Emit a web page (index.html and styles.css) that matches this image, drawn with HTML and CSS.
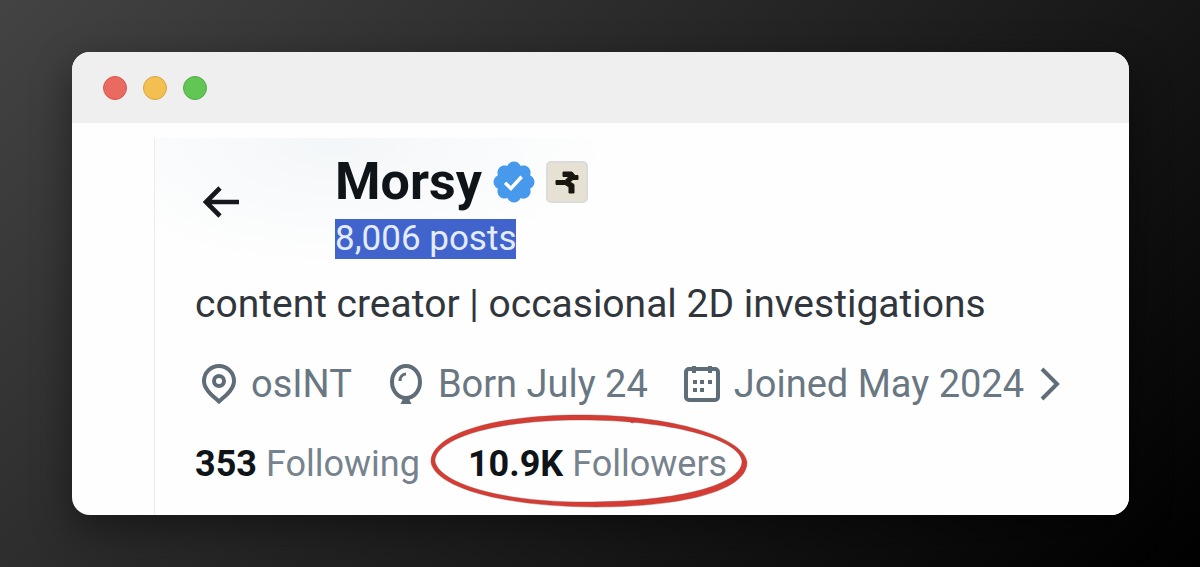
FILE: index.html
```html
<!DOCTYPE html>
<html lang="en">
<head>
<meta charset="utf-8">
<meta name="viewport" content="width=device-width, initial-scale=1">
<title>Morsy</title>
<link rel="stylesheet" href="styles.css">
</head>
<body class="backdrop">
<main class="window">
  <div class="titlebar">
    <span class="light light-close"></span>
    <span class="light light-minimize"></span>
    <span class="light light-zoom"></span>
  </div>
  <div class="viewport">
    <section class="profile">
      <header class="head">
        <button class="back" type="button" aria-label="Back">
          <svg class="back-icon" viewBox="0 0 38 32"><path d="M18 2 4 16l14 14M4 16h33" fill="none" stroke="currentColor" stroke-width="4.6"/></svg>
        </button>
        <div class="identity">
          <div class="name-row">
            <h1 class="name">Morsy</h1>
            <svg class="verified" viewBox="0 0 22 22" role="img" aria-label="Verified account"><path fill="#4799eb" d="M20.396 11c-.018-.646-.215-1.275-.57-1.816-.354-.54-.852-.972-1.438-1.246.223-.607.27-1.264.14-1.897-.131-.634-.437-1.218-.882-1.687-.47-.445-1.053-.75-1.687-.882-.633-.13-1.29-.083-1.897.14-.273-.587-.704-1.086-1.245-1.44S11.647 1.62 11 1.604c-.646.017-1.273.213-1.813.568s-.969.854-1.24 1.44c-.608-.223-1.267-.272-1.902-.14-.635.13-1.22.436-1.69.882-.445.47-.749 1.055-.878 1.688-.13.633-.08 1.29.144 1.896-.587.274-1.087.705-1.443 1.245-.356.54-.555 1.17-.574 1.817.02.647.218 1.276.574 1.817.356.54.856.972 1.443 1.245-.224.606-.274 1.263-.144 1.896.13.634.433 1.218.877 1.688.47.443 1.054.747 1.687.878.633.132 1.29.084 1.897-.136.274.586.705 1.084 1.246 1.439.54.354 1.17.551 1.816.569.647-.016 1.276-.213 1.817-.567s.972-.854 1.245-1.44c.604.239 1.266.296 1.903.164.636-.132 1.22-.447 1.68-.907.46-.46.776-1.044.908-1.681s.075-1.299-.165-1.903c.586-.274 1.084-.705 1.439-1.246.354-.54.551-1.17.569-1.816z"/><path fill="none" stroke="#fff" stroke-width="1.6" d="m6.900 11.300 2.700 2.700 4.900-5.400"/></svg>
            <svg class="affiliate" viewBox="0 0 42 42" role="img" aria-label="Affiliate badge"><rect x="1" y="1" width="40" height="40" rx="4" fill="#e7e1d3" stroke="#dadbdc" stroke-width="2"/><path d="M17 11h9l3 3.500h3v4h-5L24 21l4 2.500V32h-5v-6l-4-2.500h-9v-4h9l4-4h-6Z" fill="#18170f" stroke="#18170f" stroke-linejoin="round"/></svg>
          </div>
          <span class="posts">8,006 posts</span>
        </div>
      </header>
      <p class="bio">content creator | occasional 2D investigations</p>
      <div class="meta">
        <span class="meta-item">
          <svg class="meta-icon" viewBox="0 0 36 40"><path d="M18 37.500C12 32 3 25.500 3 17a15 15 0 0 1 30 0c0 8.500-9 15-15 20.500Z"/><circle cx="18" cy="17" r="5"/></svg>
          <span>osINT</span>
        </span>
        <span class="meta-item">
          <svg class="meta-icon" viewBox="0 0 36 40"><ellipse cx="18" cy="18" rx="14" ry="16"/><path d="M12 17c0-4 2.500-7 6-7" stroke-width="3"/><path class="solid" d="M14.500 33h7v3l2 4h-11l2-4Z"/></svg>
          <span>Born July 24</span>
        </span>
        <span class="meta-item">
          <svg class="meta-icon" viewBox="0 0 36 40"><rect x="2" y="5" width="32" height="31" rx="3"/><path d="M10 2v7M26 2v7"/><path d="M9 18h4m3 0h4m4 0h4M9 26h4m3 0h4"/></svg>
          <span>Joined May 2024</span>
        </span>
        <button class="more" type="button" aria-label="More details">
          <svg class="more-icon" viewBox="0 0 20 34"><path d="m2 2 15 15L2 32" fill="none" stroke="currentColor" stroke-width="4"/></svg>
        </button>
      </div>
      <nav class="stats">
        <a class="stat" href="#following"><b class="count">353</b> Following</a>
        <a class="stat stat-circled" href="#followers"><b class="count">10.9K</b> Followers
          <svg class="circle" viewBox="0 0 320 94" preserveAspectRatio="none" aria-hidden="true"><path fill="#d63c34" fill-rule="evenodd" stroke="#8a4640" stroke-width=".4" d="M1 48C0 24 52 1 152 1c94 0 164 23 167 47 1 30-70 45-151 45C70 93 4 72 1 48ZM5 47c4 22 65 41 150 41 87 0 159-15 159-41C311 25 242 6 152 6 60 6 5 26 5 47Z"/><path d="M200 7l4 2 2-2" fill="none" stroke="#cf3d36"/></svg>
        </a>
      </nav>
    </section>
  </div>
</main>
</body>
</html>
```

FILE: styles.css
```css
* {
  box-sizing: border-box;
}

.backdrop {
  display: flex;
  min-height: 100vh;
  margin: 0;
  padding: 52px 71px 52px 72px;
  background: linear-gradient(135deg, #434343 0%, #000 100%);
  font-family: Roboto, "Liberation Sans", sans-serif;
}

.window {
  display: flex;
  flex: 1;
  flex-direction: column;
  overflow: hidden;
  border-radius: 18px;
  background: #fefefe;
  box-shadow: 0 14px 40px rgba(0, 0, 0, 0.45);
}

.titlebar {
  display: flex;
  align-items: center;
  gap: 16px;
  height: 71px;
  padding: 0 31px;
  background: #efefef;
}

.light {
  width: 24px;
  height: 24px;
  border: 1px solid;
  border-radius: 50%;
}

.light-close {
  border-color: #cf5a52;
  background: #eb6a5f;
}

.light-minimize {
  border-color: #d9a548;
  background: #f3bf50;
}

.light-zoom {
  border-color: #54ab46;
  background: #61c654;
}

.viewport {
  display: flex;
  flex: 1;
  padding: 15px 0 0 82px;
}

.profile {
  flex: 1;
  border-left: 1px solid #e9edf0;
  padding: 17px 40px 23px;
  background: radial-gradient(ellipse 280px 130px at 180px 0, #f3f6f8, #fefefe);
}

.head {
  display: flex;
  gap: 95px;
}

.back,
.more {
  display: flex;
  align-items: center;
  border: 0;
  padding: 0;
  background: none;
  color: #15191d;
}

.back {
  height: 94px;
  padding-left: 7px;
}

.back-icon {
  width: 38px;
  height: 32px;
}

.name-row {
  display: flex;
  align-items: center;
  gap: 10px;
  height: 54px;
}

.name {
  margin: 0;
  color: #0f1419;
  font-size: 52px;
  font-weight: 700;
  line-height: 52px;
}

.verified {
  width: 48px;
  height: 48px;
  margin: 0 -2px;
}

.affiliate {
  width: 42px;
  height: 42px;
}

.posts {
  display: inline-block;
  margin-top: 10px;
  background: #4064cc;
  color: #e3ebfc;
  font-size: 35px;
  line-height: 40px;
}

.bio {
  margin: 21px 0 0;
  color: #30363c;
  font-size: 39px;
  line-height: 48px;
}

.meta {
  display: flex;
  align-items: center;
  gap: 36px;
  margin-top: 32px;
  padding-left: 6px;
  color: #697783;
  font-size: 38px;
  line-height: 48px;
  white-space: nowrap;
}

.meta-item {
  display: flex;
  align-items: center;
  gap: 14px;
}

.meta-icon {
  width: 36px;
  height: 40px;
  fill: none;
  stroke: #5f6d79;
  stroke-width: 4;
}

.solid {
  fill: #5f6d79;
  stroke: none;
}

.more {
  margin-left: -20px;
  color: #5f6d79;
}

.more-icon {
  width: 20px;
  height: 34px;
}

.stats {
  display: flex;
  gap: 48px;
  margin-top: 32px;
  font-size: 36px;
  line-height: 48px;
  white-space: nowrap;
}

.stat {
  color: #76828d;
  text-decoration: none;
}

.stat-circled {
  position: relative;
}

.count {
  color: #0f1419;
  font-weight: 700;
}

.circle {
  position: absolute;
  top: -26px;
  left: -38px;
  width: 318px;
  height: 94px;
}
```
